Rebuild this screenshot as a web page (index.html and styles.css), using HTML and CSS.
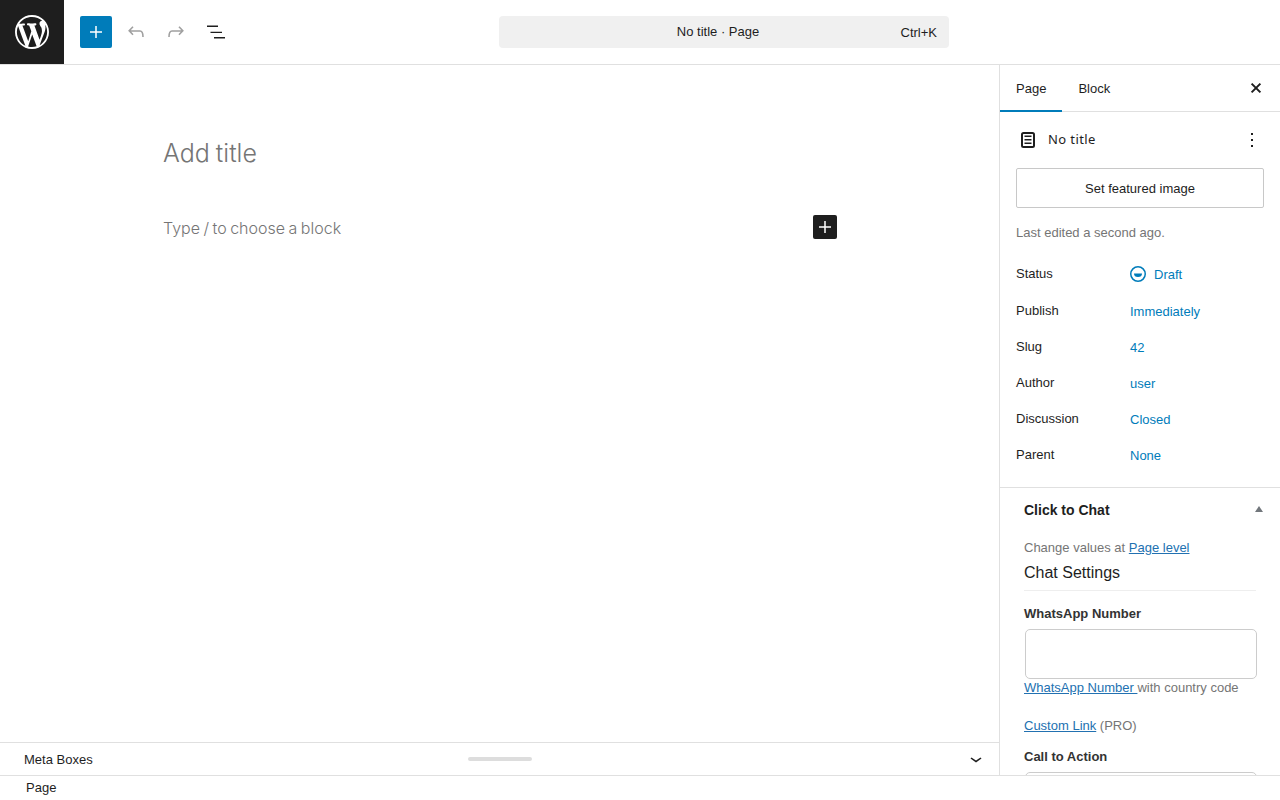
FILE: index.html
```html
<!DOCTYPE html>
<html lang="en">
<head>
<meta charset="utf-8">
<title>Edit Page</title>
<link rel="stylesheet" href="styles.css">
</head>
<body>
<div class="editor">
  <header class="topbar">
    <a class="wp-logo" href="#" aria-label="WordPress">
      <svg width="34" height="34" viewBox="0 0 20 20"><path fill="#fff" d="M20 10c0-5.51-4.49-10-10-10C4.48 0 0 4.49 0 10c0 5.52 4.48 10 10 10 5.51 0 10-4.48 10-10zM7.78 15.37L4.37 6.22c.55-.02 1.17-.08 1.17-.08.5-.06.44-1.13-.06-1.11 0 0-1.45.11-2.37.11-.18 0-.37 0-.58-.01C4.12 2.69 6.87 1.11 10 1.11c2.33 0 4.45.87 6.05 2.34-.68-.11-1.65.39-1.65 1.58 0 .74.45 1.36.9 2.1.35.61.55 1.36.55 2.46 0 1.49-1.4 5-1.4 5l-3.03-8.37c.54-.02.82-.17.82-.17.5-.05.44-1.25-.06-1.22 0 0-1.44.12-2.38.12-.87 0-2.33-.12-2.33-.12-.5-.03-.56 1.2-.06 1.22l.92.08 1.26 3.41zM17.41 10c.24-.64.74-1.87.43-4.25.7 1.29 1.05 2.71 1.05 4.25 0 3.29-1.73 6.24-4.4 7.78.97-2.59 1.94-5.2 2.92-7.78zM6.1 18.09C3.12 16.65 1.11 13.53 1.11 10c0-1.3.23-2.48.72-3.59C3.25 10.3 4.67 14.2 6.1 18.09zm4.03-6.63l2.58 6.98c-.86.29-1.76.45-2.71.45-.79 0-1.57-.11-2.29-.33.81-2.38 1.62-4.74 2.42-7.1z"/></svg>
    </a>
    <div class="tools">
      <button class="tool tool-add" aria-label="Add block">
        <svg width="24" height="24" viewBox="0 0 24 24"><path fill="#fff" d="M11.25 12.75V18H12.75V12.75H18V11.25H12.75V6H11.25V11.25H6V12.75H11.25Z"/></svg>
      </button>
      <button class="tool" aria-label="Undo">
        <svg width="24" height="24" viewBox="0 0 24 24"><path fill="none" stroke="#a0a0a0" stroke-width="1.6" d="M9 6.8L5.2 10.8 9 14.8M5.4 11H16c2 0 3 1.4 3 6"/></svg>
      </button>
      <button class="tool" aria-label="Redo">
        <svg width="24" height="24" viewBox="0 0 24 24"><path fill="none" stroke="#a0a0a0" stroke-width="1.6" d="M15 6.8L18.8 10.8 15 14.8M18.6 11H8c-2 0-3 1.4-3 6"/></svg>
      </button>
      <button class="tool" aria-label="Document overview">
        <svg width="24" height="24" viewBox="0 0 24 24"><path fill="#1e1e1e" d="M3 5.5h11V7H3zM6.5 11.75h11.5V13H6.5zM10 17h11v1.5H10z"/></svg>
      </button>
    </div>
    <div class="command-wrap">
      <div class="command">
        <span class="command-title">No title · Page</span>
        <span class="command-key">Ctrl+K</span>
      </div>
    </div>
  </header>

  <div class="workspace">
    <main class="content">
      <div class="canvas">
        <div class="post">
          <h1 class="post-title">Add title</h1>
          <div class="block-row">
            <p class="block-hint">Type / to choose a block</p>
            <button class="inline-add" aria-label="Add block">
              <svg width="24" height="24" viewBox="0 0 24 24"><path fill="#fff" d="M11.25 12.75V18H12.75V12.75H18V11.25H12.75V6H11.25V11.25H6V12.75H11.25Z"/></svg>
            </button>
          </div>
        </div>
      </div>
      <div class="meta-boxes">
        <span class="meta-label">Meta Boxes</span>
        <span class="meta-handle"></span>
        <svg class="meta-chevron" width="24" height="24" viewBox="0 0 24 24"><path fill="#1e1e1e" d="M6.5 9.5l1-1 4.5 2.9 4.5-2.9 1 1-5.5 4z"/></svg>
      </div>
    </main>

    <aside class="sidebar">
      <div class="tabs">
        <span class="tab tab-active">Page</span>
        <span class="tab">Block</span>
        <button class="close" aria-label="Close">
          <svg width="24" height="24" viewBox="0 0 24 24"><path fill="none" stroke="#1e1e1e" stroke-width="2" d="M7.6 7.6l8.8 8.8M16.4 7.6l-8.8 8.8"/></svg>
        </button>
      </div>
      <section class="summary">
        <div class="doc-head">
          <svg class="doc-icon" width="24" height="24" viewBox="0 0 24 24"><path fill="#1e1e1e" d="M15.5 7.5h-7V9h7V7.5zm-7 3.5h7v1.5h-7V11zm7 3.5h-7V16h7v-1.5z"/><rect x="6" y="5" width="12" height="14" rx="1.5" fill="none" stroke="#1e1e1e" stroke-width="2"/></svg>
          <span class="doc-title">No title</span>
          <svg class="doc-more" width="24" height="24" viewBox="0 0 24 24"><path fill="#1e1e1e" d="M13 19h-2v-2h2v2zm0-6h-2v-2h2v2zm0-6h-2V5h2v2z"/></svg>
        </div>
        <button class="featured">Set featured image</button>
        <p class="last-edited">Last edited a second ago.</p>
        <dl class="props">
          <div class="prop prop-status">
            <dt>Status</dt>
            <dd class="status-value">
              <svg width="16" height="16" viewBox="0 0 16 16"><circle cx="8" cy="8" r="7.25" fill="none" stroke="#007cba" stroke-width="1.5"/><path fill="#007cba" d="M4 7.5h8a4 3.5 0 01-8 0z"/></svg>
              <span>Draft</span>
            </dd>
          </div>
          <div class="prop prop-publish"><dt>Publish</dt><dd>Immediately</dd></div>
          <div class="prop"><dt>Slug</dt><dd>42</dd></div>
          <div class="prop"><dt>Author</dt><dd>user</dd></div>
          <div class="prop"><dt>Discussion</dt><dd>Closed</dd></div>
          <div class="prop"><dt>Parent</dt><dd>None</dd></div>
        </dl>
      </section>
      <section class="chat">
        <div class="chat-head">
          <h2>Click to Chat</h2>
          <span class="chat-caret"></span>
        </div>
        <p class="chat-line">Change values at <a href="#">Page level</a></p>
        <h3 class="chat-settings">Chat Settings</h3>
        <label class="field-label">WhatsApp Number</label>
        <input class="field-input" type="text">
        <p class="chat-help"><a href="#">WhatsApp Number </a>with country code</p>
        <p class="chat-custom"><a href="#">Custom Link</a> (PRO)</p>
        <label class="field-label field-label-cta">Call to Action</label>
        <input class="field-input" type="text">
      </section>
    </aside>
  </div>

  <footer class="statusbar">Page</footer>
</div>
</body>
</html>
```
FILE: styles.css
```css
* { box-sizing: border-box; }
html, body { margin: 0; height: 100%; overflow: hidden; }
body { font-family: "Liberation Sans", Arial, sans-serif; font-size: 13px; color: #1e1e1e; background: #fff; }
button { font: inherit; background: none; border: 0; padding: 0; color: inherit; }
p, h1, h2, h3, dl, dd { margin: 0; }
a { color: #2271b1; }

.editor { display: flex; flex-direction: column; height: 800px; }

.topbar { flex: 0 0 65px; display: flex; align-items: flex-start; border-bottom: 1px solid #e0e0e0; position: relative; }
.wp-logo { width: 64px; height: 64px; background: #1e1e1e; display: flex; align-items: center; justify-content: center; }
.tools { display: flex; align-items: center; height: 64px; padding-left: 16px; gap: 8px; }
.tool { width: 32px; height: 32px; display: flex; align-items: center; justify-content: center; border-radius: 2px; }
.tool-add { background: #007cba; }

.command-wrap { position: absolute; left: 499px; top: 16px; width: 450px; }
.command { height: 32px; background: #f0f0f0; border-radius: 4px; display: flex; align-items: center; justify-content: center; position: relative; }
.command-title { position: relative; left: -6px; top: -1px; }
.command-key { position: absolute; right: 12px; top: 9px; }

.workspace { flex: 1; display: flex; min-height: 0; }
.content { flex: 1; min-width: 0; display: flex; flex-direction: column; }
.canvas { flex: 1; min-height: 0; padding: 72px 163px 0; }
.post { width: 674px; }
.post-title { font-family: Inter, sans-serif; font-weight: 300; font-size: 25px; line-height: 32px; word-spacing: -1px; color: #757575; }
.block-row { display: flex; align-items: center; justify-content: space-between; margin-top: 46px; height: 24px; }
.block-hint { font-family: Inter, sans-serif; font-weight: 300; font-size: 16px; line-height: 24px; word-spacing: -1px; color: #757575; position: relative; top: 1px; }
.inline-add { width: 24px; height: 24px; background: #1e1e1e; border-radius: 2px; display: block; }
.inline-add svg { display: block; }

.meta-boxes { flex: 0 0 33px; display: flex; align-items: center; border-top: 1px solid #e0e0e0; position: relative; padding-left: 24px; }
.meta-label { color: #1e1e1e; }
.meta-handle { position: absolute; left: 468px; top: 14px; width: 64px; height: 4px; border-radius: 2px; background: #ddd; }
.meta-chevron { position: absolute; right: 11px; top: 6px; }

.sidebar { flex: 0 0 281px; border-left: 1px solid #e0e0e0; overflow: hidden; }
.tabs { height: 47px; display: flex; border-bottom: 1px solid #e0e0e0; position: relative; }
.tab { padding: 0 16px; line-height: 47px; height: 47px; }
.tab-active { box-shadow: inset 0 -2px 0 #007cba; }
.close { position: absolute; right: 12px; top: 11px; width: 24px; height: 24px; }
.close svg, .doc-icon, .doc-more { display: block; }

.summary { padding: 16px 16px 0; height: 376px; border-bottom: 1px solid #e0e0e0; }
.doc-head { display: flex; align-items: center; height: 24px; position: relative; }
.doc-title { font-family: "Noto Sans", sans-serif; font-size: 13px; letter-spacing: .4px; margin: 0 0 2px 8px; }
.doc-more { position: absolute; right: 0; top: 0; }
.featured { display: block; width: 100%; height: 40px; margin-top: 16px; border: 1px solid #c8c8c8; border-radius: 2px; }
.last-edited { margin-top: 17px; line-height: 16px; color: #757575; }

.props { margin-top: 16px; }
.prop { display: flex; height: 36px; align-items: center; }
.prop dt { width: 114px; position: relative; top: -2px; }
.prop dd { color: #007cba; position: relative; top: -1px; }
.prop-status { height: 37px; }
.status-value { display: flex; align-items: center; gap: 8px; }
.status-value svg { display: block; margin-bottom: 1px; }

.chat { padding: 0 24px; }
.chat-head { height: 44px; display: flex; align-items: center; justify-content: space-between; position: relative; }
.chat-head h2 { font-size: 14px; font-weight: 700; }
.chat-caret { position: absolute; right: -7px; top: 18px; border-left: 4px solid transparent; border-right: 4px solid transparent; border-bottom: 6px solid #72777c; }
.chat-line { margin-top: 8px; line-height: 16px; color: #757575; }
.chat-settings { font-size: 16px; font-weight: 400; line-height: 20px; margin-top: 7px; padding-bottom: 7px; border-bottom: 1px solid #eee; }
.field-label { display: block; font-weight: 700; color: #333; line-height: 16px; margin-top: 15px; }
.field-input { display: block; width: 232px; height: 50px; margin: 7px 0 0 1px; border: 1px solid #ccc; border-radius: 5px; background: #fff; }
.chat-help { line-height: 16px; color: #757575; margin-top: 1px; }
.chat-custom { line-height: 16px; color: #757575; margin-top: 22px; }
.field-label-cta { margin-top: 15px; }

.statusbar { flex: 0 0 25px; height: 25px; border-top: 1px solid #e0e0e0; padding-left: 26px; line-height: 23px; background: #fff; position: relative; z-index: 1; }
```
